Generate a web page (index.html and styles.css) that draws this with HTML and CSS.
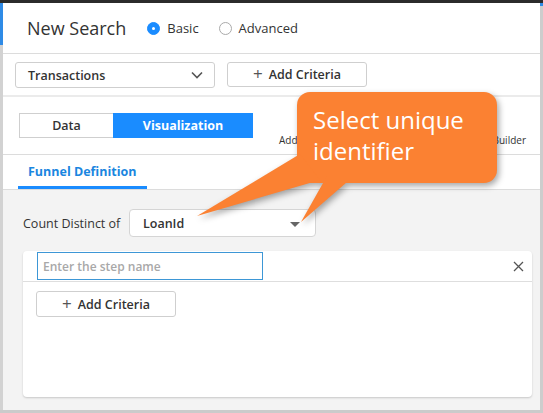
FILE: index.html
```html
<!DOCTYPE html>
<html>
<head>
<meta charset="utf-8">
<link rel="stylesheet" href="styles.css">
</head>
<body>
<div class="topbar"></div>
<div class="frame">
  <div class="edge-left"></div>
  <div class="panel">
    <header class="header">
      <h1 class="title">New Search</h1>
      <label class="radio"><span class="dot checked"></span>Basic</label>
      <label class="radio"><span class="dot"></span>Advanced</label>
    </header>
    <div class="toolbar">
      <div class="select">
        <span>Transactions</span>
        <svg class="chev" width="12" height="8" viewBox="0 0 12 8"><path d="M1 1.5 L6 6.5 L11 1.5" fill="none" stroke="#555" stroke-width="1.6"/></svg>
      </div>
      <button class="btn wide"><span class="plus">+</span>Add Criteria</button>
    </div>
    <div class="modes">
      <div class="switch">
        <div class="sw-item">Data</div>
        <div class="sw-item active">Visualization</div>
      </div>
      <div class="links">
        <span>Add</span>
        <span>Builder</span>
      </div>
    </div>
    <div class="subtabs">
      <div class="subtab active">Funnel Definition</div>
    </div>
    <div class="content">
      <div class="count-row">
        <span class="count-label">Count Distinct of</span>
        <div class="select2">
          <span>LoanId</span>
          <span class="tri"></span>
        </div>
      </div>
      <div class="card">
        <div class="card-head">
          <div class="step-input">Enter the step name</div>
          <span class="close">
            <svg width="11" height="11" viewBox="0 0 11 11"><path d="M1 1 L10 10 M10 1 L1 10" stroke="#555" stroke-width="1.3"/></svg>
          </span>
        </div>
        <div class="card-body">
          <button class="btn small"><span class="plus">+</span>Add Criteria</button>
        </div>
      </div>
    </div>
  </div>
  <div class="edge-right"></div>
</div>

<div class="callout">
  <svg class="callout-shape" width="543" height="413" viewBox="0 0 543 413">
    <g class="shape">
      <rect x="297" y="92" width="200" height="91" rx="13" ry="13" fill="#fb8132"/>
      <polygon points="300,154 197,216 320,180" fill="#fb8132"/>
      <polygon points="327,176 301,222 354,176" fill="#fb8132"/>
    </g>
  </svg>
  <div class="callout-text">Select unique<br>identifier</div>
</div>
</body>
</html>
```
FILE: styles.css
```css
* { box-sizing: border-box; }
html, body { margin: 0; padding: 0; }
body {
  width: 543px;
  height: 413px;
  overflow: hidden;
  background: #cbcbcb;
  position: relative;
  font-family: "Open Sans", "DejaVu Sans", sans-serif;
  color: #333;
}
.topbar { height: 3px; background: #2b2b2b; }
.frame { display: flex; height: 407px; }
.edge-left { width: 3px; background: linear-gradient(#2f8be6 0 42px, #d2d2d2 42px); }
.edge-right { width: 3px; background: linear-gradient(#2f8be6 0 3px, #cdcdcd 3px); }
.panel { flex: 1; background: #fff; display: flex; flex-direction: column; }

.header {
  height: 51px;
  border-bottom: 1px solid #dcdcdc;
  display: flex;
  align-items: center;
  padding-left: 24px;
}
.title { margin: 0 21px 0 0; font-size: 18px; font-weight: 400; color: #333; letter-spacing: 0; }
.radio { display: flex; align-items: center; font-size: 13px; color: #333; margin-right: 20px; }
.dot {
  width: 13px; height: 13px; border-radius: 50%;
  border: 1px solid #aaa; background: #fff; margin-right: 7px; position: relative;
}
.dot.checked { background: #1a8cff; border-color: #1a8cff; }
.dot.checked::after {
  content: ""; position: absolute; left: 4px; top: 4px; width: 3px; height: 3px;
  border-radius: 50%; background: #fff;
}

.toolbar {
  display: flex; align-items: flex-start;
  padding: 8px 0 7px 12px;
  border-bottom: 2px solid #ebebeb;
}
.select {
  width: 200px; height: 26px;
  border: 1px solid #cfcfcf; border-radius: 3px;
  display: flex; align-items: center; justify-content: space-between;
  padding: 0 11px 0 12px;
  font-size: 12.5px; font-weight: 600; color: #333;
}
.btn {
  font-family: inherit; background: #fff; color: #333;
  border: 1px solid #cfcfcf; border-radius: 3px;
  display: flex; align-items: center; justify-content: center;
  font-size: 12.5px; font-weight: 600; padding: 0;
}
.btn .plus { font-weight: 400; font-size: 17px; margin-right: 6px; line-height: 1; position: relative; top: -1px; color: #555; }
.btn.wide { width: 140px; height: 25px; margin-left: 12px; }

.modes {
  height: 58px;
  border-bottom: 1px solid #dcdcdc;
  display: flex; align-items: flex-start;
  padding: 16px 14px 0 16px;
}
.switch { display: flex; border: 1px solid #cfcfcf; height: 25px; }
.sw-item {
  width: 93px; display: flex; align-items: center; justify-content: center;
  font-size: 12.5px; font-weight: 600; color: #333;
}
.sw-item.active { width: 140px; background: #1a8cff; color: #fff; font-weight: 700; margin: -1px -1px -1px 0; }
.links {
  flex: 1; display: flex; justify-content: space-between;
  margin-top: 20px; padding-left: 26px;
  font-size: 10px; color: #333; line-height: 14px;
}

.subtabs { height: 35px; border-bottom: 1px solid #dcdcdc; display: flex; padding-left: 15px; }
.subtab {
  padding: 1px 10px 0; display: flex; align-items: center;
  font-size: 12.5px; font-weight: 700; color: #1a86e0;
  border-bottom: 3px solid #1a8cff; width: 129px;
}

.content {
  flex: 1; background: #f3f3f3;
  display: flex; flex-direction: column;
  padding: 19px 8px 13px 20px;
}
.count-row { display: flex; align-items: center; }
.count-label { font-size: 12.5px; color: #333; width: 106px; }
.select2 {
  width: 187px; height: 28px; background: #fff;
  border: 1px solid #d5d5d5; border-radius: 4px;
  display: flex; align-items: center; justify-content: space-between;
  padding: 0 15px 0 13px;
  font-size: 12.5px; font-weight: 600; color: #333;
}
.tri { width: 0; height: 0; border-left: 5px solid transparent; border-right: 5px solid transparent; border-top: 5px solid #666; margin-top: 2px; }

.card {
  margin-top: 14px; flex: 1;
  background: #fff; border-radius: 4px;
  box-shadow: 0 1px 2px rgba(0,0,0,0.18);
  display: flex; flex-direction: column;
}
.card-head {
  height: 31px; border-bottom: 1px solid #dedede;
  display: flex; align-items: flex-start; justify-content: space-between;
  padding: 1px 8px 0 14px;
}
.step-input {
  width: 226px; height: 28px;
  border: 1px solid #3d97d6;
  display: flex; align-items: center; padding-left: 5px;
  font-size: 12px; font-weight: 600; color: #a8a8a8;
}
.close { display: flex; align-items: center; height: 28px; }
.card-body { padding: 9px 13px; }
.btn.small { width: 140px; height: 26px; }

.callout { position: absolute; left: 0; top: 0; width: 543px; height: 413px; pointer-events: none; }
.callout-shape { position: absolute; left: 0; top: 0; }
.shape { filter: drop-shadow(2px 3px 3px rgba(0,0,0,0.35)); }
.callout-text {
  position: absolute; left: 313px; top: 104px;
  font-size: 24px; line-height: 31px; color: #fff; font-weight: 400;
}
```
